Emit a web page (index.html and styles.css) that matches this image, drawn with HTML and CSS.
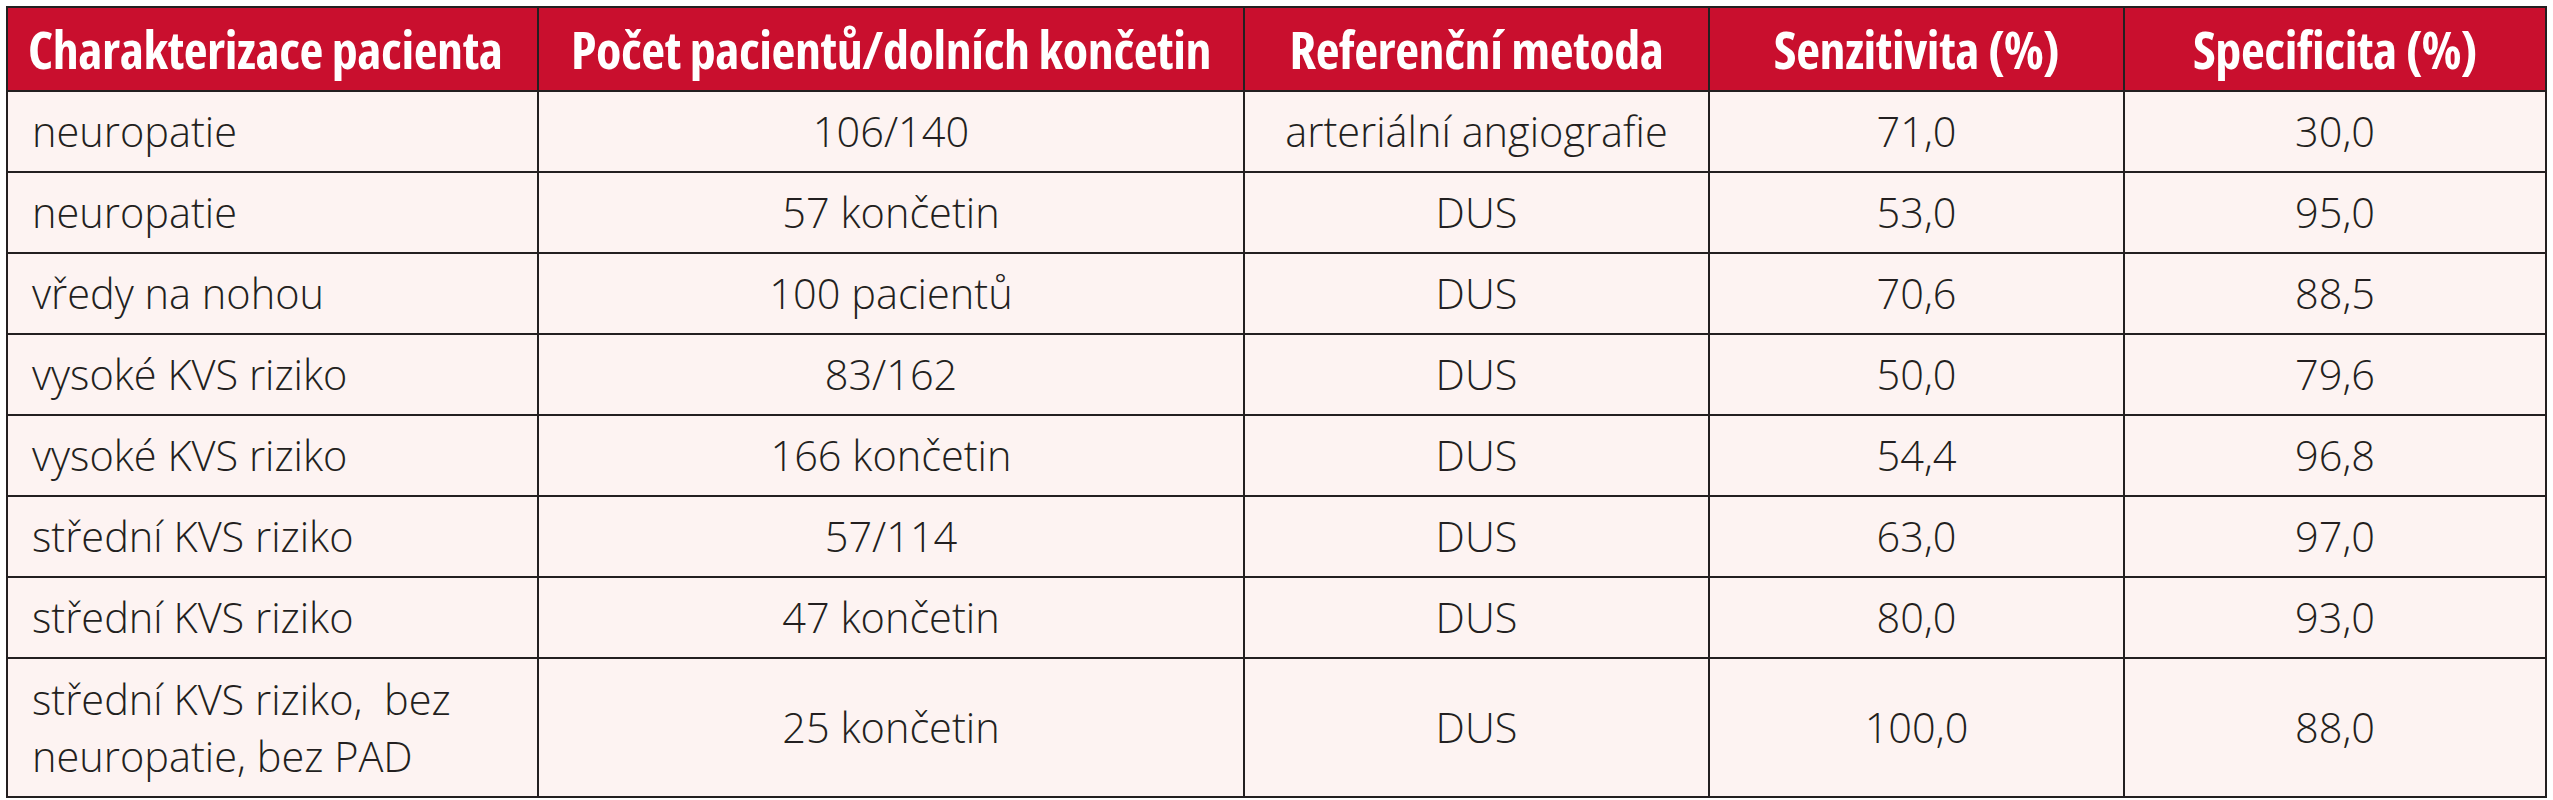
FILE: index.html
```html
<!DOCTYPE html>
<html lang="cs">
<head>
<meta charset="utf-8">
<link rel="stylesheet" href="styles.css">
</head>
<body>
<table class="data">
  <colgroup>
    <col class="c1"><col class="c2"><col class="c3"><col class="c4"><col class="c5">
  </colgroup>
  <thead>
    <tr>
      <th class="first">Charakterizace pacienta</th>
      <th>Počet pacientů/dolních končetin</th>
      <th>Referenční metoda</th>
      <th>Senzitivita (%)</th>
      <th>Specificita (%)</th>
    </tr>
  </thead>
  <tbody>
    <tr><td class="first">neuropatie</td><td>106/140</td><td>arteriální angiografie</td><td>71,0</td><td>30,0</td></tr>
    <tr><td class="first">neuropatie</td><td>57 končetin</td><td>DUS</td><td>53,0</td><td>95,0</td></tr>
    <tr><td class="first">vředy na nohou</td><td>100 pacientů</td><td>DUS</td><td>70,6</td><td>88,5</td></tr>
    <tr><td class="first">vysoké KVS riziko</td><td>83/162</td><td>DUS</td><td>50,0</td><td>79,6</td></tr>
    <tr><td class="first">vysoké KVS riziko</td><td>166 končetin</td><td>DUS</td><td>54,4</td><td>96,8</td></tr>
    <tr><td class="first">střední KVS riziko</td><td>57/114</td><td>DUS</td><td>63,0</td><td>97,0</td></tr>
    <tr><td class="first">střední KVS riziko</td><td>47 končetin</td><td>DUS</td><td>80,0</td><td>93,0</td></tr>
    <tr class="tall"><td class="first">střední KVS riziko,&nbsp; bez<br>neuropatie, bez PAD</td><td>25 končetin</td><td>DUS</td><td>100,0</td><td>88,0</td></tr>
  </tbody>
</table>
</body>
</html>
```

FILE: styles.css
```css
html, body {
  margin: 0;
  padding: 0;
  background: #ffffff;
}

body {
  padding: 6px 0 0 6px;
}

.data {
  border-collapse: collapse;
  table-layout: fixed;
  width: 2540px;
  color: #231f20;
}

.c1 { width: 531px; }
.c2 { width: 706px; }
.c3 { width: 465px; }
.c4 { width: 415px; }
.c5 { width: 422px; }

.data th,
.data td {
  border: 2px solid #231f20;
  text-align: center;
  vertical-align: middle;
  padding: 0 20px;
}

.data th {
  background: #c90f2e;
  color: #ffffff;
  font-family: "Open Sans", sans-serif;
  font-stretch: 87.5%;
  font-weight: 700;
  font-size: 52px;
  height: 82px;
  line-height: 56px;
  white-space: nowrap;
  letter-spacing: -0.4px;
}

.data th.first {
  text-align: left;
}

.data td {
  background: #fdf3f2;
  font-family: "Open Sans", sans-serif;
  font-weight: 300;
  font-size: 41.5px;
  line-height: 57px;
  height: 81px;
  padding-top: 11px;
  padding-bottom: 11px;
  box-sizing: border-box;
}

.data .tall td {
  height: 139px;
}

.data td.first {
  text-align: left;
  padding-left: 24px;
}
```
